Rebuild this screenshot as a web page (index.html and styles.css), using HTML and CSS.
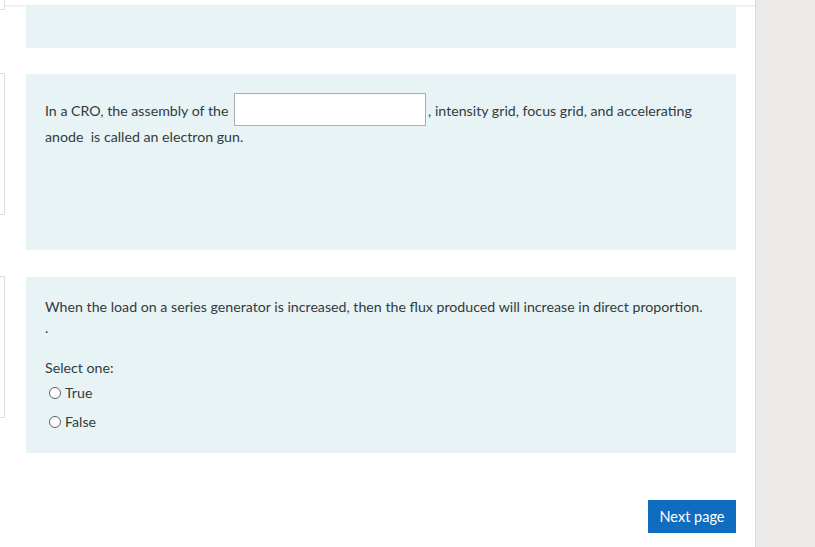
FILE: index.html
```html
<!DOCTYPE html>
<html>
<head>
<meta charset="utf-8">
<link rel="stylesheet" href="styles.css">
</head>
<body>
<div class="page">
  <div class="main">
    <div class="topline"></div>
    <div class="q-row q-row-first">
      <div class="info info-top"></div>
      <div class="formulation f-short"></div>
    </div>
    <div class="q-row">
      <div class="info info-mid"></div>
      <div class="formulation f-tall">
        <p class="qtext">In a CRO, the assembly of the <input class="blank" type="text">, intensity grid, focus grid, and accelerating anode&nbsp; is called an electron gun.</p>
      </div>
    </div>
    <div class="q-row q-row-last">
      <div class="info info-mid"></div>
      <div class="formulation f-tall">
        <p class="qtext">When the load on a series generator is increased, then the flux produced will increase in direct proportion.<br>.</p>
        <p class="prompt">Select one:</p>
        <div class="answer">
          <label class="opt"><span class="radio"></span>True</label>
          <label class="opt"><span class="radio"></span>False</label>
        </div>
      </div>
    </div>
    <div class="nav">
      <button class="next">Next page</button>
    </div>
  </div>
  <div class="sidebar"></div>
</div>
</body>
</html>
```
FILE: styles.css
```css
html, body {
  margin: 0;
  padding: 0;
  background: #fff;
}
body {
  font-family: Lato, "Liberation Sans", sans-serif;
  color: #343a40;
  font-size: 14.2px;
}
.page {
  display: flex;
  width: 815px;
  height: 547px;
  overflow: hidden;
}
.main {
  width: 755px;
  display: flex;
  flex-direction: column;
}
.sidebar {
  width: 60px;
  background: #ebeae8;
  border-left: 1px solid #dcdbd8;
  box-sizing: border-box;
}
.topline {
  height: 6px;
  border-bottom: 1px solid #ececec;
  box-sizing: border-box;
  box-shadow: 0 1px 2px rgba(0,0,0,0.04);
}
.q-row {
  display: flex;
  align-items: flex-start;
  margin-top: 26px;
}
.q-row-first {
  margin-top: 0;
}
.q-row-last {
  margin-top: 27px;
}
.info {
  width: 5px;
  box-sizing: border-box;
  border: 1px solid #dedede;
  border-left: none;
  background: #fff;
  flex: none;
}
.info-top {
  height: 10px;
  margin-top: -6px;
  border-top: none;
}
.info-mid {
  height: 142px;
  margin-top: -1px;
}
.formulation {
  margin-left: 21px;
  width: 710px;
  background: #e7f3f5;
  box-sizing: border-box;
  padding: 19px 19px;
}
.f-short {
  height: 42px;
}
.f-tall {
  height: 176px;
}
.qtext {
  margin: 0;
  line-height: 21px;
}
.blank {
  width: 192px;
  height: 33px;
  box-sizing: border-box;
  border: 1px solid #a9adb3;
  background: #fff;
  font-family: Lato, "Liberation Sans", sans-serif;
  font-size: 14.2px;
  vertical-align: 1px;
  margin: 0 2px 0 2px;
  padding: 0;
}
.prompt {
  margin: 19px 0 0 0;
  line-height: 21px;
}
.answer {
  display: flex;
  flex-direction: column;
  gap: 8px;
  margin-top: 4px;
}
.opt {
  display: flex;
  align-items: center;
  line-height: 21px;
  padding-left: 4px;
}
.radio {
  width: 12px;
  height: 12px;
  border: 1px solid #5f6368;
  border-radius: 50%;
  box-sizing: border-box;
  background: #fff;
  margin-right: 4px;
}
.nav {
  display: flex;
  justify-content: flex-end;
  padding-right: 19px;
  margin-top: 47px;
}
.next {
  width: 88px;
  height: 33px;
  background: #0f6cbf;
  color: #fff;
  border: none;
  font-family: Lato, "Liberation Sans", sans-serif;
  font-size: 14.5px;
  padding: 0;
}
```
